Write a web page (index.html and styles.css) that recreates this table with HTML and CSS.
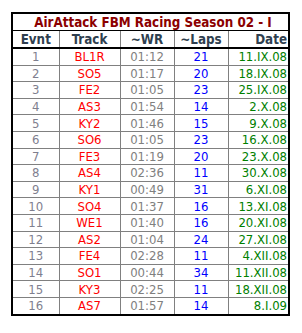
FILE: index.html
```html
<!DOCTYPE html>
<html>
<head>
<meta charset="utf-8">
<link rel="stylesheet" href="styles.css">
</head>
<body>
<table class="sheet">
  <colgroup>
    <col class="c-evnt"><col class="c-track"><col class="c-wr"><col class="c-laps"><col class="c-date">
  </colgroup>
  <tr class="title-row"><td colspan="5">AirAttack FBM Racing Season 02 - I</td></tr>
  <tr class="head-row"><th>Evnt</th><th>Track</th><th>~WR</th><th>~Laps</th><th class="date">Date</th></tr>
  <tr><td class="evnt">1</td><td class="track">BL1R</td><td class="wr">01:12</td><td class="laps">21</td><td class="date">11.IX.08</td></tr>
  <tr><td class="evnt">2</td><td class="track">SO5</td><td class="wr">01:17</td><td class="laps">20</td><td class="date">18.IX.08</td></tr>
  <tr><td class="evnt">3</td><td class="track">FE2</td><td class="wr">01:05</td><td class="laps">23</td><td class="date">25.IX.08</td></tr>
  <tr><td class="evnt">4</td><td class="track">AS3</td><td class="wr">01:54</td><td class="laps">14</td><td class="date">2.X.08</td></tr>
  <tr><td class="evnt">5</td><td class="track">KY2</td><td class="wr">01:46</td><td class="laps">15</td><td class="date">9.X.08</td></tr>
  <tr><td class="evnt">6</td><td class="track">SO6</td><td class="wr">01:05</td><td class="laps">23</td><td class="date">16.X.08</td></tr>
  <tr><td class="evnt">7</td><td class="track">FE3</td><td class="wr">01:19</td><td class="laps">20</td><td class="date">23.X.08</td></tr>
  <tr><td class="evnt">8</td><td class="track">AS4</td><td class="wr">02:36</td><td class="laps">11</td><td class="date">30.X.08</td></tr>
  <tr><td class="evnt">9</td><td class="track">KY1</td><td class="wr">00:49</td><td class="laps">31</td><td class="date">6.XI.08</td></tr>
  <tr><td class="evnt">10</td><td class="track">SO4</td><td class="wr">01:37</td><td class="laps">16</td><td class="date">13.XI.08</td></tr>
  <tr><td class="evnt">11</td><td class="track">WE1</td><td class="wr">01:40</td><td class="laps">16</td><td class="date">20.XI.08</td></tr>
  <tr><td class="evnt">12</td><td class="track">AS2</td><td class="wr">01:04</td><td class="laps">24</td><td class="date">27.XI.08</td></tr>
  <tr><td class="evnt">13</td><td class="track">FE4</td><td class="wr">02:28</td><td class="laps">11</td><td class="date">4.XII.08</td></tr>
  <tr><td class="evnt">14</td><td class="track">SO1</td><td class="wr">00:44</td><td class="laps">34</td><td class="date">11.XII.08</td></tr>
  <tr><td class="evnt">15</td><td class="track">KY3</td><td class="wr">02:25</td><td class="laps">11</td><td class="date">18.XII.08</td></tr>
  <tr><td class="evnt">16</td><td class="track">AS7</td><td class="wr">01:57</td><td class="laps">14</td><td class="date">8.I.09</td></tr>
</table>
</body>
</html>
```
FILE: styles.css
```css
html, body {
  margin: 0;
  padding: 0;
  background: #fff;
}
body {
  padding: 12px 0 0 11px;
  font-family: "DejaVu Sans Condensed", "DejaVu Sans", sans-serif;
  font-size: 13px;
}
.sheet {
  border-collapse: collapse;
  border: 2px solid #000;
  width: 279px;
  table-layout: fixed;
}
.c-evnt { width: 47px; }
.c-track { width: 61px; }
.c-wr { width: 54px; }
.c-laps { width: 54px; }
.c-date { width: 61px; }
.sheet td, .sheet th {
  border: 1px solid #808080;
  padding: 0 1px;
  height: 15.6px;
  line-height: 15px;
  text-align: center;
  white-space: nowrap;
  overflow: hidden;
}
.title-row td {
  color: #8b0000;
  font-weight: bold;
  font-size: 13.3px;
  border-bottom: 1px solid #000;
  height: 16px;
  padding-left: 6px;
}
.head-row th {
  color: #2f3f4f;
  font-weight: bold;
  font-size: 13.3px;
  border-bottom: 2px solid #000;
  height: 16px;
}
.sheet .date { text-align: right; }
.evnt { color: #7f7f8f; }
.track { color: #ff0000; }
.wr { color: #808080; }
.laps { color: #0000ff; }
.sheet td.date { color: #008000; }
```
